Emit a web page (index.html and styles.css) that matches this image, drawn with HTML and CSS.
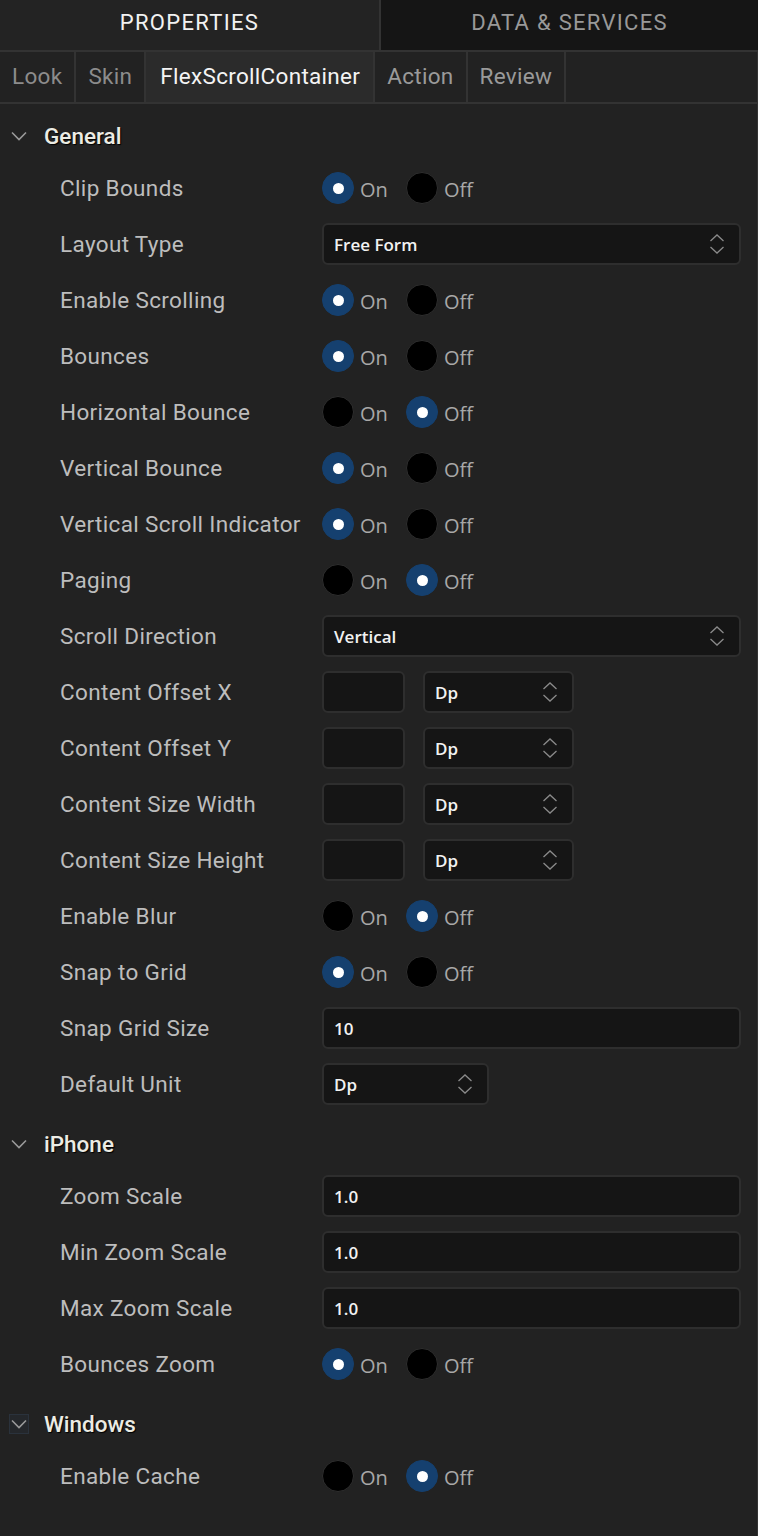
FILE: index.html
```html
<!DOCTYPE html>
<html>
<head>
<meta charset="utf-8">
<link rel="stylesheet" href="styles.css">
</head>
<body>
<div class="panel">
  <div class="maintabs">
    <div class="maintab active">PROPERTIES</div>
    <div class="maintab">DATA &amp; SERVICES</div>
  </div>
  <div class="subtabs">
    <div class="subtab">Look</div>
    <div class="subtab">Skin</div>
    <div class="subtab active">FlexScrollContainer</div>
    <div class="subtab">Action</div>
    <div class="subtab">Review</div>
  </div>

  <div class="section">
    <div class="sechead"><span class="chev"><svg width="16" height="10" viewBox="0 0 16 10"><path d="M1 1.5 L8 8.5 L15 1.5" fill="none" stroke="#9a9a9a" stroke-width="1.6"/></svg></span><span class="sectitle">General</span></div>
    <div class="row"><div class="label">Clip Bounds</div><div class="radios"><span class="radio on"></span><span class="rlabel">On</span><span class="radio"></span><span class="rlabel">Off</span></div></div>
    <div class="row"><div class="label">Layout Type</div><div class="select wide"><span>Free Form</span><i class="updown"><svg width="16" height="22" viewBox="0 0 16 22"><path d="M1.5 8 L8 2 L14.5 8 M1.5 14 L8 20 L14.5 14" fill="none" stroke="#8a8a8a" stroke-width="1.3"/></svg></i></div></div>
    <div class="row"><div class="label">Enable Scrolling</div><div class="radios"><span class="radio on"></span><span class="rlabel">On</span><span class="radio"></span><span class="rlabel">Off</span></div></div>
    <div class="row"><div class="label">Bounces</div><div class="radios"><span class="radio on"></span><span class="rlabel">On</span><span class="radio"></span><span class="rlabel">Off</span></div></div>
    <div class="row"><div class="label">Horizontal Bounce</div><div class="radios"><span class="radio"></span><span class="rlabel">On</span><span class="radio on"></span><span class="rlabel">Off</span></div></div>
    <div class="row"><div class="label">Vertical Bounce</div><div class="radios"><span class="radio on"></span><span class="rlabel">On</span><span class="radio"></span><span class="rlabel">Off</span></div></div>
    <div class="row"><div class="label">Vertical Scroll Indicator</div><div class="radios"><span class="radio on"></span><span class="rlabel">On</span><span class="radio"></span><span class="rlabel">Off</span></div></div>
    <div class="row"><div class="label">Paging</div><div class="radios"><span class="radio"></span><span class="rlabel">On</span><span class="radio on"></span><span class="rlabel">Off</span></div></div>
    <div class="row"><div class="label">Scroll Direction</div><div class="select wide"><span>Vertical</span><i class="updown"><svg width="16" height="22" viewBox="0 0 16 22"><path d="M1.5 8 L8 2 L14.5 8 M1.5 14 L8 20 L14.5 14" fill="none" stroke="#8a8a8a" stroke-width="1.3"/></svg></i></div></div>
    <div class="row"><div class="label">Content Offset X</div><div class="pair"><div class="input small"></div><div class="select unit"><span>Dp</span><i class="updown"><svg width="16" height="22" viewBox="0 0 16 22"><path d="M1.5 8 L8 2 L14.5 8 M1.5 14 L8 20 L14.5 14" fill="none" stroke="#8a8a8a" stroke-width="1.3"/></svg></i></div></div></div>
    <div class="row"><div class="label">Content Offset Y</div><div class="pair"><div class="input small"></div><div class="select unit"><span>Dp</span><i class="updown"><svg width="16" height="22" viewBox="0 0 16 22"><path d="M1.5 8 L8 2 L14.5 8 M1.5 14 L8 20 L14.5 14" fill="none" stroke="#8a8a8a" stroke-width="1.3"/></svg></i></div></div></div>
    <div class="row"><div class="label">Content Size Width</div><div class="pair"><div class="input small"></div><div class="select unit"><span>Dp</span><i class="updown"><svg width="16" height="22" viewBox="0 0 16 22"><path d="M1.5 8 L8 2 L14.5 8 M1.5 14 L8 20 L14.5 14" fill="none" stroke="#8a8a8a" stroke-width="1.3"/></svg></i></div></div></div>
    <div class="row"><div class="label">Content Size Height</div><div class="pair"><div class="input small"></div><div class="select unit"><span>Dp</span><i class="updown"><svg width="16" height="22" viewBox="0 0 16 22"><path d="M1.5 8 L8 2 L14.5 8 M1.5 14 L8 20 L14.5 14" fill="none" stroke="#8a8a8a" stroke-width="1.3"/></svg></i></div></div></div>
    <div class="row"><div class="label">Enable Blur</div><div class="radios"><span class="radio"></span><span class="rlabel">On</span><span class="radio on"></span><span class="rlabel">Off</span></div></div>
    <div class="row"><div class="label">Snap to Grid</div><div class="radios"><span class="radio on"></span><span class="rlabel">On</span><span class="radio"></span><span class="rlabel">Off</span></div></div>
    <div class="row"><div class="label">Snap Grid Size</div><div class="input wide"><span>10</span></div></div>
    <div class="row"><div class="label">Default Unit</div><div class="select defunit"><span>Dp</span><i class="updown"><svg width="16" height="22" viewBox="0 0 16 22"><path d="M1.5 8 L8 2 L14.5 8 M1.5 14 L8 20 L14.5 14" fill="none" stroke="#8a8a8a" stroke-width="1.3"/></svg></i></div></div>
  </div>

  <div class="section">
    <div class="sechead"><span class="chev"><svg width="16" height="10" viewBox="0 0 16 10"><path d="M1 1.5 L8 8.5 L15 1.5" fill="none" stroke="#9a9a9a" stroke-width="1.6"/></svg></span><span class="sectitle">iPhone</span></div>
    <div class="row"><div class="label">Zoom Scale</div><div class="input wide"><span>1.0</span></div></div>
    <div class="row"><div class="label">Min Zoom Scale</div><div class="input wide"><span>1.0</span></div></div>
    <div class="row"><div class="label">Max Zoom Scale</div><div class="input wide"><span>1.0</span></div></div>
    <div class="row"><div class="label">Bounces Zoom</div><div class="radios"><span class="radio on"></span><span class="rlabel">On</span><span class="radio"></span><span class="rlabel">Off</span></div></div>
  </div>

  <div class="section">
    <div class="sechead"><span class="chev focused"><svg width="16" height="10" viewBox="0 0 16 10"><path d="M1 1.5 L8 8.5 L15 1.5" fill="none" stroke="#9a9a9a" stroke-width="1.6"/></svg></span><span class="sectitle">Windows</span></div>
    <div class="row"><div class="label">Enable Cache</div><div class="radios"><span class="radio"></span><span class="rlabel">On</span><span class="radio on"></span><span class="rlabel">Off</span></div></div>
  </div>
</div>
</body>
</html>
```

FILE: styles.css
```css
* { box-sizing: border-box; }
html, body { margin: 0; padding: 0; background: #222222; }
body { width: 758px; height: 1536px; overflow: hidden; font-family: Roboto, "Liberation Sans", sans-serif; }
.panel { width: 758px; min-height: 1536px; background: #222222; border-right: 1px solid #333; }

.maintabs { display: flex; height: 52px; border-bottom: 2px solid #333333; }
.maintab { flex: 0 0 379px; display: flex; align-items: center; justify-content: center; font-size: 22px; letter-spacing: 1.3px; color: #999999; background: #151515; border-left: 2px solid #333333; padding-bottom: 6px; }
.maintab.active { flex-basis: 379px; color: #f2f2f2; background: #232323; border-left: none; }

.subtabs { display: flex; height: 52px; border-bottom: 2px solid #333333; }
.subtab { height: 50px; display: flex; align-items: center; padding: 0 12px 2px 12px; font-size: 22.5px; letter-spacing: 0.3px; color: #8c8c8c; border-right: 2px solid #333333; }
.subtab.active { color: #f4f4f4; background: #2b2b2b; padding: 0 13px 2px 14px; }
.subtab:nth-child(4), .subtab:nth-child(5) { color: #9a9a9a; }

.section { padding-top: 8px; }
.sechead { height: 48px; display: flex; align-items: center; }
.chev { width: 20px; height: 20px; margin-left: 9px; margin-right: 15px; display: flex; align-items: center; justify-content: center; }
.chev.focused { border: 1px solid #2a323c; background: #24272b; }
.sectitle { font-size: 22.5px; color: #ecece4; text-shadow: 1px 1px 1px #000; font-weight: 500; }

.row { height: 56px; display: flex; align-items: center; }
.label { width: 262px; margin-left: 60px; font-size: 22.5px; letter-spacing: 0.35px; color: #bdbdbd; white-space: nowrap; }

.radios { display: flex; align-items: center; }
.radio { width: 32px; height: 32px; border-radius: 50%; background: #000; border: 1px solid #2e2e2e; display: flex; align-items: center; justify-content: center; }
.radio.on { background: #15406f; border-color: #15406f; }
.radio.on::after { content: ""; width: 11px; height: 11px; border-radius: 50%; background: #fff; }
.rlabel { font-family: "Open Sans", "Noto Sans", sans-serif; font-size: 20px; color: #a8a8a8; margin-left: 6px; width: 46px; padding-top: 3px; }

.select, .input { height: 42px; background: #151515; border: 2px solid #2e2e2e; border-radius: 6px; display: flex; align-items: center; padding: 0 10px; font-family: "Open Sans", "Noto Sans", sans-serif; font-weight: 600; font-size: 17px; color: #f2f2f2; }
.select span, .input span { flex: 1; }
.updown { display: flex; align-items: center; margin-right: 4px; }
.wide { width: 419px; }
.pair { display: flex; gap: 18px; }
.input.small { width: 83px; }
.select.unit { width: 151px; }
.select.defunit { width: 167px; }
```
